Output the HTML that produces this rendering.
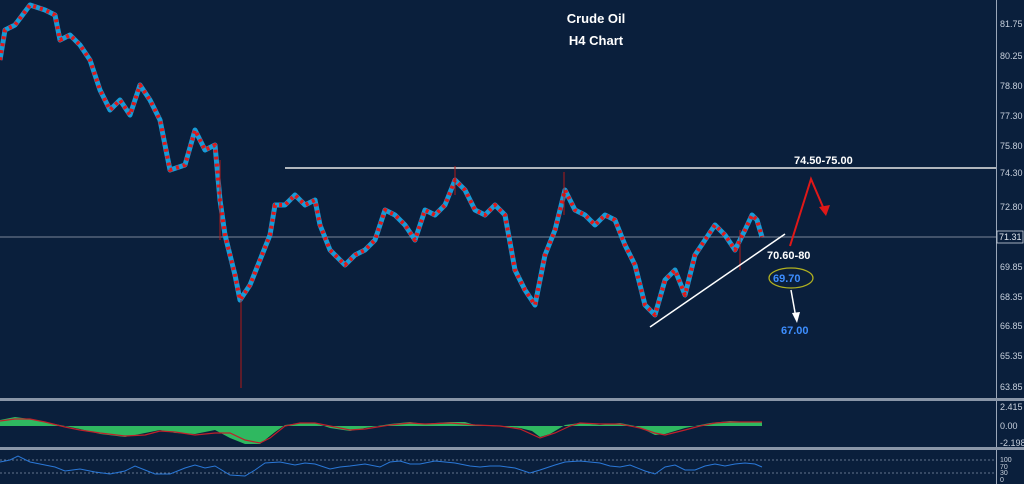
<!DOCTYPE html>
<html><head><meta charset="utf-8"><style>
html,body{margin:0;padding:0;background:#0a1f3c;}
svg{display:block;font-family:"Liberation Sans",sans-serif;}
</style></head><body>
<svg width="1024" height="484" viewBox="0 0 1024 484" xmlns="http://www.w3.org/2000/svg">
<rect width="1024" height="484" fill="#0a1f3c"/>
<line x1="0" y1="237" x2="996" y2="237" stroke="#7a8699" stroke-width="1"/>
<line x1="285" y1="168" x2="996" y2="168" stroke="#e8e8e8" stroke-width="1.5"/>
<g fill="none" stroke-linejoin="round">
<polyline stroke="#18a8e8" stroke-width="5" stroke-opacity="0.9" points="0,60 5,30 15,25 30,5 45,10 55,15 60,40 70,35 80,45 90,60 100,90 110,110 120,100 130,115 140,85 150,100 160,120 170,170 185,165 195,130 205,150 215,145 220,200 225,235 235,275 240,300 250,285 260,260 270,235 275,205 285,205 295,195 305,205 315,200 320,225 330,250 345,265 355,255 365,250 375,240 385,210 395,215 405,225 415,240 425,210 435,215 445,205 455,180 465,190 475,210 485,215 495,205 505,215 515,270 525,290 535,305 545,255 555,230 565,190 575,210 585,215 595,225 605,215 615,220 625,245 635,265 645,305 655,315 665,280 675,270 685,295 695,255 705,240 715,225 725,235 735,250 745,230 752,215 757,220 762,237"/>
<polyline stroke="#e01818" stroke-width="4" stroke-dasharray="3 4" points="0,60 5,30 15,25 30,5 45,10 55,15 60,40 70,35 80,45 90,60 100,90 110,110 120,100 130,115 140,85 150,100 160,120 170,170 185,165 195,130 205,150 215,145 220,200 225,235 235,275 240,300 250,285 260,260 270,235 275,205 285,205 295,195 305,205 315,200 320,225 330,250 345,265 355,255 365,250 375,240 385,210 395,215 405,225 415,240 425,210 435,215 445,205 455,180 465,190 475,210 485,215 495,205 505,215 515,270 525,290 535,305 545,255 555,230 565,190 575,210 585,215 595,225 605,215 615,220 625,245 635,265 645,305 655,315 665,280 675,270 685,295 695,255 705,240 715,225 725,235 735,250 745,230 752,215 757,220 762,237"/>
</g>
<g stroke="#b01818" stroke-width="1">
<line x1="241" y1="300" x2="241" y2="388"/>
<line x1="220" y1="160" x2="220" y2="240"/>
<line x1="564" y1="172" x2="564" y2="215"/>
<line x1="455" y1="166" x2="455" y2="195"/>
<line x1="740" y1="230" x2="740" y2="270"/>
</g>
<line x1="650" y1="327" x2="785" y2="234" stroke="#fff" stroke-width="1.5"/>
<polyline points="790,246 811,179 826,214" fill="none" stroke="#e01818" stroke-width="2"/>
<polygon points="826,216 819,207 830,205" fill="#e01818"/>
<ellipse cx="791" cy="278" rx="22" ry="10" fill="none" stroke="#b0b020" stroke-width="1.3"/>
<line x1="791" y1="290" x2="796" y2="318" stroke="#fff" stroke-width="1.5"/>
<polygon points="797,323 792,313 800,312" fill="#fff"/>
<g font-weight="bold" font-size="11">
<text x="794" y="164" fill="#fff">74.50-75.00</text>
<text x="767" y="259" fill="#fff">70.60-80</text>
<text x="773" y="282" fill="#3d8eff">69.70</text>
<text x="781" y="334" fill="#3d8eff">67.00</text>
</g>
<g font-weight="bold" font-size="13" fill="#fff" text-anchor="middle">
<text x="596" y="23">Crude Oil</text>
<text x="596" y="45">H4 Chart</text>
</g>
<line x1="996.5" y1="0" x2="996.5" y2="484" stroke="#9aa6b8" stroke-width="1"/>
<g font-size="9" fill="#c8d0dc">
<text x="1000" y="27">81.75</text>
<text x="1000" y="59">80.25</text>
<text x="1000" y="89">78.80</text>
<text x="1000" y="119">77.30</text>
<text x="1000" y="149">75.80</text>
<text x="1000" y="176">74.30</text>
<text x="1000" y="210">72.80</text>
<text x="1000" y="270">69.85</text>
<text x="1000" y="300">68.35</text>
<text x="1000" y="329">66.85</text>
<text x="1000" y="359">65.35</text>
<text x="1000" y="390">63.85</text>
<text x="1000" y="410">2.415</text>
<text x="1000" y="429">0.00</text>
<text x="1000" y="446">-2.198</text>
<text x="1000" y="462" font-size="7">100</text>
<text x="1000" y="469" font-size="7">70</text>
<text x="1000" y="475" font-size="7">30</text>
<text x="1000" y="482" font-size="7">0</text>
</g>
<rect x="997" y="231" width="26" height="12" fill="#0a1f3c" stroke="#c8d0dc" stroke-width="0.8"/>
<text x="999" y="240" font-size="9" fill="#e0e6ee">71.31</text>
<rect x="0" y="398" width="1024" height="3" fill="#8a96a8"/>
<rect x="0" y="447" width="1024" height="3" fill="#8a96a8"/>
<polygon fill="#2fb860" points="0,426 0,420 15,417 30,419 45,422 65,426 80,429 100,434 125,437 145,433 160,430 175,433 195,434 215,430 230,438 245,444 260,444 275,432 285,425 300,423 315,423 330,428 350,431 365,428 390,424 410,422 425,424 435,423 450,422 465,422 475,425 490,426 510,427 520,428 532,431 540,437 550,434 565,425 580,423 600,425 620,423 635,426 645,430 655,435 665,434 685,428 700,425 710,423 730,421 750,422 762,422 762,426"/>
<polyline fill="none" stroke="#c0202a" stroke-width="1.2" points="0,421 15,419 30,419 45,422 65,427 80,430 100,433 125,436 145,435 160,431 175,432 195,435 215,433 230,433 245,440 260,443 270,438 285,426 300,423 315,423 330,426 350,430 365,429 390,425 410,423 425,424 450,423 475,425 500,426 520,429 540,438 555,433 570,426 580,423 600,424 620,424 640,428 655,433 665,435 685,430 700,426 715,423 730,422 762,422"/>
<line x1="0" y1="460" x2="996" y2="460" stroke="#8090a8" stroke-width="0.8" stroke-dasharray="2 2"/>
<line x1="0" y1="473" x2="996" y2="473" stroke="#8090a8" stroke-width="0.8" stroke-dasharray="2 2"/>
<polyline fill="none" stroke="#2a78d8" stroke-width="1" points="0,462 10,460 18,456 30,462 45,465 55,467 65,471 80,469 95,472 110,474 125,471 135,466 145,470 155,474 170,474 185,468 195,465 205,468 215,466 230,475 245,476 255,470 265,463 280,462 295,465 305,463 315,464 330,469 340,467 350,466 365,464 380,467 390,462 400,461 410,464 420,464 435,461 445,462 455,463 470,466 480,467 490,466 500,466 515,468 530,473 540,470 555,465 565,462 580,461 590,462 600,463 610,466 620,467 630,465 645,471 655,474 665,467 675,465 685,470 695,470 705,466 715,464 725,466 735,464 745,463 755,464 762,467"/>
</svg>
</body></html>
